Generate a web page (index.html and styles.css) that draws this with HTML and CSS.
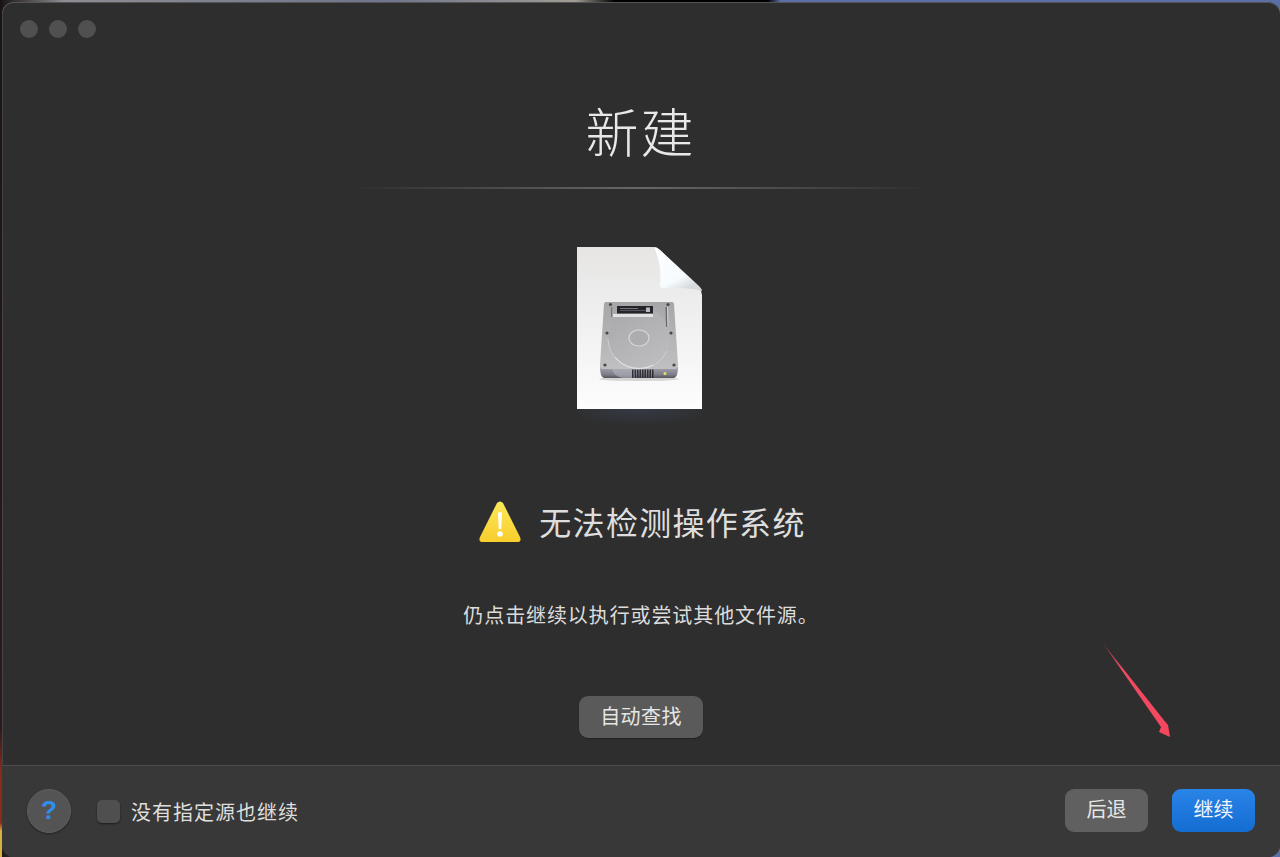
FILE: index.html
```html
<!DOCTYPE html>
<html lang="zh-CN">

<head>
    <meta charset="UTF-8">
    <title>新建</title>
    <link rel="stylesheet" href="styles.css">
</head>

<body>
    <div id="window">
        <div id="titlebar">
            <span class="light"></span>
            <span class="light"></span>
            <span class="light"></span>
        </div>

        <div id="main">
            <h1 class="page-title">新建</h1>
            <div class="divider"></div>

            <svg class="file-icon" width="125" height="190" viewBox="0 0 125 190">
                <defs>
                    <linearGradient id="page" x1="0" y1="0" x2="0" y2="1">
                        <stop offset="0" stop-color="#e6e5e4" />
                        <stop offset="0.5" stop-color="#f1f1f1" />
                        <stop offset="1" stop-color="#fdfdfd" />
                    </linearGradient>
                    <linearGradient id="fold" x1="0" y1="0" x2="0.6" y2="1">
                        <stop offset="0" stop-color="#ffffff" />
                        <stop offset="0.75" stop-color="#f6fbfe" />
                        <stop offset="1" stop-color="#d6dadc" />
                    </linearGradient>
                    <linearGradient id="plate" x1="0" y1="0" x2="0" y2="1">
                        <stop offset="0" stop-color="#a6a6a8" />
                        <stop offset="1" stop-color="#c0c0c2" />
                    </linearGradient>
                    <linearGradient id="platter" x1="0" y1="0" x2="0.6" y2="1">
                        <stop offset="0" stop-color="#a8a8aa" />
                        <stop offset="1" stop-color="#bcbcbe" />
                    </linearGradient>
                    <linearGradient id="front" x1="0" y1="0" x2="0" y2="1">
                        <stop offset="0" stop-color="#a6a6b2" />
                        <stop offset="0.7" stop-color="#7c7c88" />
                        <stop offset="1" stop-color="#55555c" />
                    </linearGradient>
                    <radialGradient id="glow" cx="0.5" cy="0" r="0.6">
                        <stop offset="0" stop-color="#343a46" />
                        <stop offset="1" stop-color="#343a46" stop-opacity="0" />
                    </radialGradient>
                </defs>
                <rect x="0" y="162" width="125" height="28" fill="url(#glow)" />
                <path d="M0 0H76Q80 0 83 3L122 41Q125 44 125 48V162H0Z" fill="url(#page)" />
                <path d="M77 0Q80 0 83 3L122 39Q125 42 125 44Q110 40 86 41Q83 41 83 38Q85 18 77 0Z" fill="url(#fold)" />

                <!-- disk -->
                <ellipse cx="62" cy="132" rx="40" ry="2" fill="#000" opacity="0.15" />
                <path d="M23 120Q23 130 27 131H97Q101 130 101 120Z" fill="url(#front)" />
                <path d="M29 55H95Q97 55 97 57L101 118Q101 122 98 122H26Q23 122 23 118L27 57Q27 55 29 55Z" fill="url(#plate)" />
                <path d="M35 122Q37 130 46 131H58V122Z" fill="#b4b4bc" opacity="0.6" />
                <circle cx="62" cy="91" r="31" fill="url(#platter)" />
                <path d="M31 92A31 31 0 0 0 62 122A31 31 0 0 0 90 104" fill="none" stroke="#d4d4d6" stroke-width="0.800" />
                <path d="M38 110A31 31 0 0 0 76 118" fill="none" stroke="#e8e8ea" stroke-width="1" />
                <ellipse cx="62" cy="91" rx="10" ry="8" fill="#adadaf" stroke="#d6d6d8" stroke-width="1.200" />
                <rect x="36" y="67" width="40" height="3" fill="#e2e2e4" />
                <rect x="34" y="60" width="1.200" height="10" fill="#77777b" />
                <rect x="40" y="59" width="36" height="7.500" fill="#24242a" />
                <rect x="43" y="61" width="18" height="1" fill="#77777d" />
                <rect x="43" y="63" width="26" height="1" fill="#55555b" />
                <rect x="69" y="60.500" width="4" height="4.500" fill="#b9b9bf" />
                <path d="M88.500 60H90L90.500 80H89Z" fill="#66666a" />
                <path d="M90 60H91L91.500 80H90.500Z" fill="#d2d2d4" />
                <g fill="#48484c">
                    <circle cx="33.500" cy="57.500" r="1.600" />
                    <circle cx="91" cy="57.500" r="1.600" />
                    <circle cx="30" cy="86" r="1.600" />
                    <circle cx="94" cy="86" r="1.600" />
                    <circle cx="28" cy="118" r="1.600" />
                    <circle cx="97" cy="118" r="1.600" />
                </g>
                <g fill="#2e2e34">
                    <rect x="55" y="122.500" width="1.500" height="8.500" />
                    <rect x="57.500" y="122.500" width="1.500" height="8.500" />
                    <rect x="60" y="122.500" width="1.500" height="8.500" />
                    <rect x="62.500" y="122.500" width="1.500" height="8.500" />
                    <rect x="65" y="122.500" width="1.500" height="8.500" />
                    <rect x="67.500" y="122.500" width="1.500" height="8.500" />
                    <rect x="70" y="122.500" width="1.500" height="8.500" />
                    <rect x="72.500" y="122.500" width="1.500" height="8.500" />
                    <rect x="75" y="122.500" width="1.500" height="8.500" />
                </g>
                <circle cx="88" cy="126.500" r="1.500" fill="#e3df60" />
            </svg>

            <div class="status-row">
                <svg class="warn-icon" width="42" height="41" viewBox="0 0 42 41">
                    <defs>
                        <linearGradient id="warn" x1="0" y1="0" x2="0" y2="1">
                            <stop offset="0" stop-color="#fbe95c" />
                            <stop offset="1" stop-color="#f9cd2c" />
                        </linearGradient>
                    </defs>
                    <path d="M18 2Q21 -1 24 2L41 36Q43 41 38 41H4Q-1 41 1 36Z" fill="url(#warn)" />
                    <path d="M19 12Q21 10 23 12L22.300 28H19.700Z" fill="#fff" />
                    <circle cx="21" cy="33" r="2.800" fill="#fff" />
                </svg>
                <h2 class="status-title">无法检测操作系统</h2>
            </div>

            <p class="hint">仍点击继续以执行或尝试其他文件源。</p>

            <button class="btn auto-btn">自动查找</button>
        </div>

        <div id="footer">
            <button class="help-btn">?</button>
            <label class="check-label">
                <span class="checkbox"></span>
                <span>没有指定源也继续</span>
            </label>
            <div class="footer-actions">
                <button class="btn back-btn">后退</button>
                <button class="btn next-btn">继续</button>
            </div>
        </div>

        <!-- red annotation arrow drawn over the screenshot -->
        <svg class="arrow" width="72" height="98" viewBox="0 0 72 98">
            <defs>
                <linearGradient id="arrow-fill" x1="0" y1="0" x2="1" y2="1">
                    <stop offset="0" stop-color="#7a3640" />
                    <stop offset="0.3" stop-color="#f04a60" />
                    <stop offset="1" stop-color="#f5475f" />
                </linearGradient>
            </defs>
            <path d="M0 0L63 79.500L66 83L68 95L57 90L59 85Z" fill="url(#arrow-fill)" />
        </svg>
    </div>
</body>

</html>
```

FILE: styles.css
```css
* {
    box-sizing: border-box;
}

html,
body {
    height: 100%;
}

body {
    margin: 0;
    overflow: hidden;
    padding: 2px 0 0 2px;
    font-family: "Noto Sans CJK SC", "Liberation Sans", sans-serif;
    background:
        linear-gradient(to bottom, #1a1414 0, #2a1c1c 85%, #8a2a1c 90%, #8a2a1c 96%, #d8b23c 97%) left top / 2px 100% no-repeat,
        linear-gradient(to right, #1a1414 0, #8d8d92 5%, #6e748c 30%, #a09c94 45%, #000 48%, #000 60%, #5a6fa6 61%, #5a6fa6 100%);
}

#window {
    position: relative;
    height: 855px;
    display: flex;
    flex-direction: column;
    background-color: #2e2e2e;
    border-radius: 12px;
    box-shadow: inset 0 1px 0 #555, inset 1px 0 0 #444;
    overflow: hidden;
}

#titlebar {
    display: flex;
    gap: 11px;
    padding: 18px 0 0 18px;
    height: 48px;
    flex-shrink: 0;
}

.light {
    width: 18px;
    height: 18px;
    border-radius: 50%;
    background-color: #505050;
}

#main {
    flex-grow: 1;
    display: flex;
    flex-direction: column;
    align-items: center;
}

.page-title {
    margin: 42px 1px 0 0;
    font-size: 53px;
    line-height: 76px;
    font-weight: 300;
    letter-spacing: 2px;
    color: #e8e8e8;
}

.divider {
    width: 580px;
    height: 2px;
    margin: 19px 3px 0 0;
    background: linear-gradient(to right, rgba(120, 120, 120, 0), #686868 50%, rgba(120, 120, 120, 0));
}

.file-icon {
    display: block;
    margin: 58px 3px 0 0;
}

.status-row {
    display: flex;
    align-items: center;
    gap: 18px;
    margin: 64px 0 0 3px;
    height: 41px;
}

.status-title {
    margin: 0;
    font-size: 32px;
    line-height: 41px;
    font-weight: 400;
    letter-spacing: 1.300px;
    color: #dedede;
}

.hint {
    margin: 58px 0 0;
    font-size: 20px;
    line-height: 30px;
    letter-spacing: 0.900px;
    color: #dcdcdc;
}

.btn {
    font-family: inherit;
    font-size: 20px;
    line-height: 1;
    border: none;
    border-radius: 9px;
    color: #e6e6e6;
    background-color: #5a5a5a;
    padding: 0 0 3px;
}

.auto-btn {
    width: 124px;
    height: 42px;
    margin: 66px 0 0;
    letter-spacing: 0.400px;
    box-shadow: 0 1px 1px rgba(0, 0, 0, 0.3);
}

#footer {
    flex-shrink: 0;
    height: 92px;
    display: flex;
    align-items: center;
    padding: 0 25px 2px;
    background-color: #383838;
    border-top: 1px solid #4c4c4c;
}

.help-btn {
    width: 44px;
    height: 44px;
    padding: 0;
    border: 1px solid #606060;
    border-radius: 50%;
    background-color: #545454;
    color: #2f8ff0;
    font-family: "Liberation Sans", sans-serif;
    font-size: 26px;
    font-weight: 700;
    box-shadow: 0 1px 2px rgba(0, 0, 0, 0.4);
}

.check-label {
    display: flex;
    align-items: center;
    gap: 11px;
    margin: 2px 0 0 26px;
    font-size: 20px;
    letter-spacing: 1px;
    color: #dedede;
}

.checkbox {
    width: 23px;
    height: 23px;
    border-radius: 5px;
    background-color: #4f4f4f;
    box-shadow: 0 1px 2px rgba(0, 0, 0, 0.5);
}

.footer-actions {
    display: flex;
    gap: 24px;
    margin-left: auto;
}

.back-btn,
.next-btn {
    width: 83px;
    height: 43px;
}

.back-btn {
    background-color: #606060;
}

.next-btn {
    color: #f2f6fb;
    background: linear-gradient(to bottom, #2a84e8, #136dd2);
}

.arrow {
    position: absolute;
    left: 1100px;
    top: 640px;
}
```
